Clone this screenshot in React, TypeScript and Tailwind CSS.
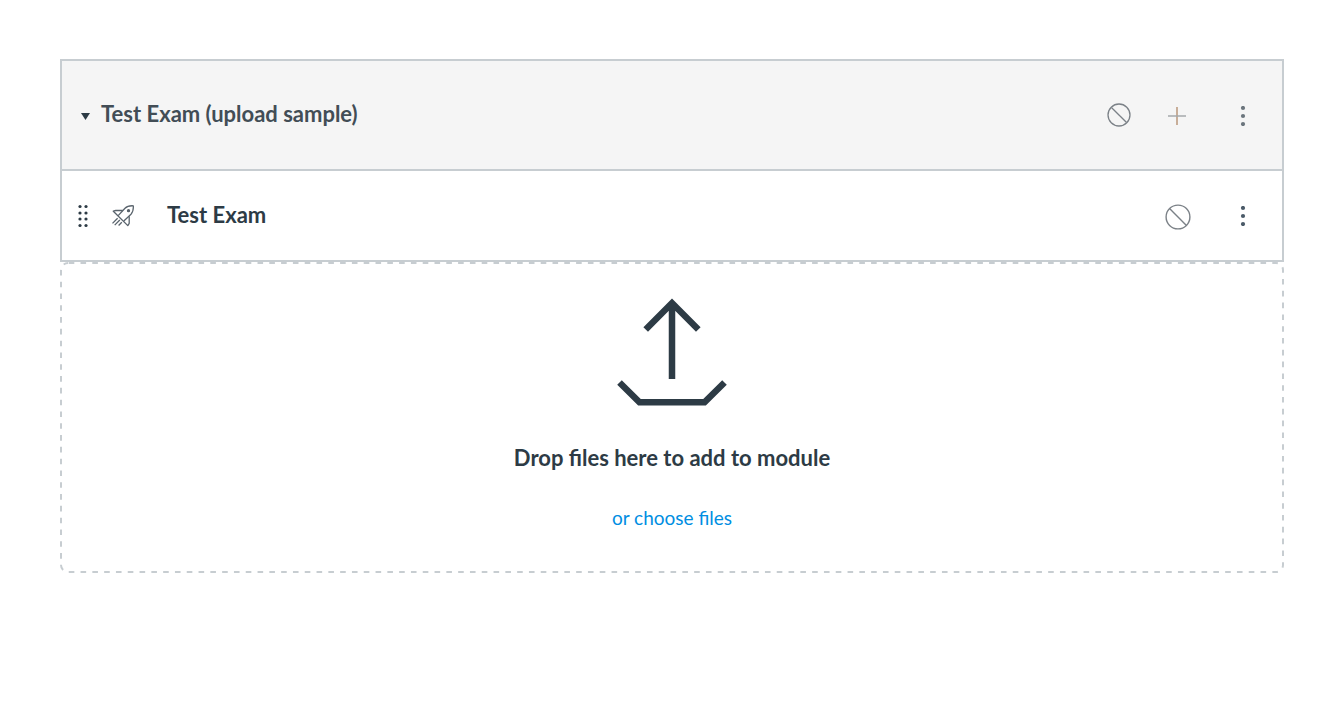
import React from "react";

const BanIcon = ({ size }: { size: number }) => (
  <svg width={size} height={size} viewBox="0 0 26 26" fill="none" stroke="#7b8187" strokeWidth="1.4" aria-hidden="true">
    <circle cx="13" cy="13" r="11.9" />
    <path d="M4.8 4.8 21.2 21.2" />
  </svg>
);

const PlusIcon = () => (
  <svg width="18" height="18" viewBox="0 0 18 18" fill="none" strokeWidth="1.5" aria-hidden="true">
    <path d="M9 0v18" stroke="#b8967a" />
    <path d="M0 9h18" stroke="#a5a8ab" />
  </svg>
);

const MoreIcon = () => (
  <svg width="6" height="20" viewBox="0 0 6 20" fill="currentColor" aria-hidden="true">
    <circle cx="3" cy="2" r="2.1" />
    <circle cx="3" cy="10" r="2.1" />
    <circle cx="3" cy="18" r="2.1" />
  </svg>
);

const DragIcon = () => (
  <svg width="12" height="24" viewBox="0 0 12 24" fill="#2d3b45" aria-hidden="true">
    {[2.5, 9, 15, 21.5].map((y) => (
      <React.Fragment key={y}>
        <circle cx="3" cy={y} r="1.6" />
        <circle cx="9" cy={y} r="1.6" />
      </React.Fragment>
    ))}
  </svg>
);

const RocketIcon = () => (
  <svg width="22" height="22" viewBox="0 0 22 22" fill="none" stroke="#59636c" strokeWidth="1.3" strokeLinejoin="round" aria-hidden="true">
    <path d="M6.2 10.6 13 3.200C15 1.200 18 .6 21.3.8 21.5 4 21.200 7 19 9.200L11.800 16" />
    <path d="M10.800 5.500H3.800L1.300 6.200 15.800 20.600 17.200 18.300V11.200" />
    <path d="M5.600 13.300.5 18.400M7.800 15 2.700 20.100M9.800 17.300 6.600 20.500" />
    <circle cx="16.500" cy="5.700" r="1" fill="#59636c" />
  </svg>
);

const UploadIcon = () => (
  <svg width="112" height="108" viewBox="0 0 112 108" fill="none" stroke="#2d3b45" strokeWidth="6.500" aria-hidden="true">
    <path d="M56 81V6M29.700 31.500 56 5 82.300 31.500" />
    <path d="M3.500 84.500 23.500 104.300H88.500L108.500 84.500" />
  </svg>
);

const DashedFrame = () => (
  <svg className="pointer-events-none absolute inset-0 h-full w-full" fill="none" aria-hidden="true">
    <rect
      className="h-[calc(100%-2px)] w-[calc(100%-2px)]"
      x="1"
      y="1"
      rx="7"
      stroke="#c7cdd1"
      strokeWidth="2"
      strokeDasharray="5.6 6.2"
      strokeDashoffset="-0.7"
    />
  </svg>
);

export default function App() {
  return (
    <main className="pt-[59px] pr-9 pl-[60px] font-[Lato,sans-serif] text-[#2d3b45]">
      <section className="border-2 border-[#c7cdd1]">
        <header className="flex h-[110px] items-center border-b-2 border-[#c7cdd1] bg-[#f5f5f5] pr-9 pl-[19px]">
          <button type="button" aria-expanded="true" className="flex items-center gap-[11px] pb-0.5 text-[22px] leading-7 font-bold text-[#424d56]">
            <svg className="mt-1" width="9" height="7" viewBox="0 0 9 7" fill="#2d3b45" aria-hidden="true">
              <path d="M0 0h9L4.500 7z" />
            </svg>
            <span>Test Exam (upload sample)</span>
          </button>
          <div className="ml-auto flex items-center pt-0.5">
            <button type="button" aria-label="Publish module" className="mr-[37px] pb-0.5">
              <BanIcon size={24} />
            </button>
            <button type="button" aria-label="Add item" className="mr-[54px]">
              <PlusIcon />
            </button>
            <button type="button" aria-label="Manage module" className="text-[#6b757d]">
              <MoreIcon />
            </button>
          </div>
        </header>
        <div className="flex h-[89px] items-center pr-9 pl-[15px]">
          <button type="button" aria-label="Move item">
            <DragIcon />
          </button>
          <span className="ml-[23px]">
            <RocketIcon />
          </span>
          <a href="#exam" className="ml-[33px] pb-0.5 text-[22px] leading-7 font-bold">
            Test Exam
          </a>
          <div className="ml-auto flex items-center">
            <button type="button" aria-label="Publish item" className="mr-[49px] pt-0.5">
              <BanIcon size={26} />
            </button>
            <button type="button" aria-label="Manage item" className="text-[#4a5a68]">
              <MoreIcon />
            </button>
          </div>
        </div>
      </section>
      <section className="relative flex flex-col items-center pt-9 pb-[42px]">
        <DashedFrame />
        <UploadIcon />
        <p className="mt-[38px] text-[22px] leading-7 font-bold">Drop files here to add to module</p>
        <button type="button" className="mt-[33px] text-[19px] leading-[26px] text-[#008ee2]">
          or choose files
        </button>
      </section>
    </main>
  );
}
